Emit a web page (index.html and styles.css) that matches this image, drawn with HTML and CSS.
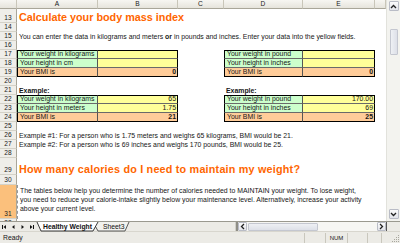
FILE: index.html
```html
<!DOCTYPE html>
<html><head><meta charset="utf-8"><link rel="stylesheet" href="styles.css"></head>
<body>
<div class="app">
 <div class="main">
  <div class="sheet">
   <div class="ch corner"></div><div class="ch">A</div><div class="ch">B</div><div class="ch">C</div><div class="ch">D</div><div class="ch">E</div><div class="ch"></div>

   <div class="rh">13</div><div class="c s6 title"><span>Calculate your body mass index</span></div>
   <div class="rh">14</div><div class="c s6"></div>
   <div class="rh">15</div><div class="c s6"><span>You can enter the data in kilograms and meters <b>or</b> in pounds and inches. Enter your data into the yellow fields.</span></div>
   <div class="rh">16</div><div class="c s6"></div>

   <div class="rh">17</div>
   <div class="c t g tl tt"><span>Your weight in kilograms</span></div>
   <div class="c t y tt tr"></div>
   <div class="c"></div>
   <div class="c t g tl tt"><span>Your weight in pound</span></div>
   <div class="c t y tt tr"></div>
   <div class="c"></div>

   <div class="rh">18</div>
   <div class="c t g tl"><span>Your height in cm</span></div>
   <div class="c t y tr"></div>
   <div class="c"></div>
   <div class="c t g tl"><span>Your height in inches</span></div>
   <div class="c t y tr"></div>
   <div class="c"></div>

   <div class="rh">19</div>
   <div class="c t o tl tb"><span>Your BMI is</span></div>
   <div class="c t o tr tb num bold"><span>0</span></div>
   <div class="c"></div>
   <div class="c t o tl tb"><span>Your BMI is</span></div>
   <div class="c t o tr tb num bold"><span>0</span></div>
   <div class="c"></div>

   <div class="rh">20</div><div class="c s6"></div>

   <div class="rh">21</div>
   <div class="c bold"><span>Example:</span></div>
   <div class="c s2"></div>
   <div class="c bold"><span>Example:</span></div>
   <div class="c s2"></div>

   <div class="rh">22</div>
   <div class="c t g tl tt"><span>Your weight in kilograms</span></div>
   <div class="c t y tt tr num"><span>65</span></div>
   <div class="c"></div>
   <div class="c t g tl tt"><span>Your weight in pound</span></div>
   <div class="c t y tt tr num"><span>170.00</span></div>
   <div class="c"></div>

   <div class="rh">23</div>
   <div class="c t g tl"><span>Your height in meters</span></div>
   <div class="c t y tr num"><span>1.75</span></div>
   <div class="c"></div>
   <div class="c t g tl"><span>Your height in inches</span></div>
   <div class="c t y tr num"><span>69</span></div>
   <div class="c"></div>

   <div class="rh">24</div>
   <div class="c t o tl tb"><span>Your BMI is</span></div>
   <div class="c t o tr tb num bold"><span>21</span></div>
   <div class="c"></div>
   <div class="c t o tl tb"><span>Your BMI is</span></div>
   <div class="c t o tr tb num bold"><span>25</span></div>
   <div class="c"></div>

   <div class="rh">25</div><div class="c s6"></div>
   <div class="rh">26</div><div class="c s6"><span>Example #1: For a person who is 1.75 meters and weighs 65 kilograms, BMI would be 21.</span></div>
   <div class="rh">27</div><div class="c s6"><span>Example #2: For a person who is 69 inches and weighs 170 pounds, BMI would be 25.</span></div>
   <div class="rh">28</div><div class="c s6"></div>
   <div class="rh">29</div><div class="c s6 title wide"><span>How many calories do I need to maintain my weight?</span></div>
   <div class="rh">30</div><div class="c s6"></div>
   <div class="rh sel">31</div><div class="s5 wrap">The tables below help you determine the number of calories needed to MAINTAIN your weight. To lose weight,<br>you need to reduce your calorie-intake slightly below your maintenance level. Alternatively, increase your activity<br>above your current level.</div><div class="c"></div>
   <div class="rh last">32</div><div class="c s6"></div>
  </div>

  <div class="vscroll">
   <div class="sbtn v"><svg width="7" height="5" viewBox="0 0 7 5"><path d="M1 4 L3.5 1.5 L6 4" fill="none" stroke="#222" stroke-width="1.3"/></svg></div>
   <div class="vtrack"><div class="vthumb"></div></div>
   <div class="sbtn v"><svg width="7" height="5" viewBox="0 0 7 5"><path d="M1 1 L3.5 3.5 L6 1" fill="none" stroke="#222" stroke-width="1.3"/></svg></div>
  </div>
 </div>

 <div class="tabbar">
  <div class="nav">
   <svg width="36" height="10" viewBox="0 0 36 10">
    <rect x="2" y="3" width="1" height="4" fill="#111"/><path d="M6 3 L3.5 5 L6 7Z" fill="#111"/>
    <path d="M14.5 3 L12 5 L14.5 7Z" fill="#111"/>
    <path d="M21.5 3 L24 5 L21.5 7Z" fill="#111"/>
    <path d="M30 3 L32.5 5 L30 7Z" fill="#111"/><rect x="33" y="3" width="1" height="4" fill="#111"/>
   </svg>
  </div>
  <div class="tabs">
   <svg class="tabshape" width="96" height="10" viewBox="0 0 96 10">
    <path d="M57 0 L62 9 L89 9 L93 0" fill="#f2f2ee" stroke="#333" stroke-width="0.8"/>
    <path d="M1 0 L5 9 L57 9 L62 0" fill="#fff" stroke="#222" stroke-width="0.9"/>
   </svg>
   <span class="tab act">Healthy Weight</span>
   <span class="tab">Sheet3</span>
  </div>
  <div class="spacer"></div>
  <div class="split"></div>
  <div class="hscroll">
   <div class="sbtn h"><svg width="5" height="7" viewBox="0 0 5 7"><path d="M4 1 L1.5 3.5 L4 6" fill="none" stroke="#222" stroke-width="1.3"/></svg></div>
   <div class="htrack"><div class="hthumb"></div></div>
   <div class="sbtn h"><svg width="5" height="7" viewBox="0 0 5 7"><path d="M1 1 L3.5 3.5 L1 6" fill="none" stroke="#222" stroke-width="1.3"/></svg></div>
  </div>
  <div class="corner2"></div>
 </div>

 <div class="status">
  <span class="ready">Ready</span>
  <div class="panels">
   <div class="panel w1"></div>
   <div class="panel w2">NUM</div>
   <div class="panel w3"></div>
   <div class="panel w4"></div>
   <div class="grip">
    <svg width="10" height="10" viewBox="0 0 10 10"><g fill="#a8a79e"><rect x="8" y="2" width="1" height="1"/><rect x="6" y="4" width="1" height="1"/><rect x="8" y="4" width="1" height="1"/><rect x="4" y="6" width="1" height="1"/><rect x="6" y="6" width="1" height="1"/><rect x="8" y="6" width="1" height="1"/><rect x="2" y="8" width="1" height="1"/><rect x="4" y="8" width="1" height="1"/><rect x="6" y="8" width="1" height="1"/><rect x="8" y="8" width="1" height="1"/></g></svg>
   </div>
  </div>
 </div>
</div>
</body></html>
```

FILE: styles.css
```css
*{box-sizing:border-box;margin:0;padding:0}
html,body{width:400px;height:243px;overflow:hidden;background:#fff}
body{font-family:"Liberation Sans",Arial,sans-serif;font-size:6.9px;color:#161616}
.app{display:flex;flex-direction:column;width:400px;height:243px}
.main{display:flex;height:221px}
.sheet{display:grid;grid-template-columns:17px 81px 80px 46px 79px 72px 11px;grid-template-rows:9px 14px repeat(15,9px) 17px 10px 34px 2px;width:386px;height:221px;overflow:hidden}
.ch{background:linear-gradient(#f7f6f2,#e6e4dc);border-right:1px solid #c9c6b9;border-bottom:1px solid #a9a699;display:flex;align-items:center;justify-content:center;line-height:8px;color:#222;font-size:6.6px}
.rh{background:#efeee9;border-right:1px solid #a9a699;border-bottom:1px solid #d4d2c8;display:flex;align-items:flex-end;justify-content:center;line-height:8px;color:#222;overflow:hidden;font-size:6.6px}
.rh.sel{background:#fbc07c}
.rh.last{align-items:flex-start;border-bottom:0}
.c{display:flex;align-items:flex-end;white-space:nowrap;padding:0 2px;line-height:8px;min-width:0}
.s6{grid-column:span 6}
.s5{grid-column:span 5}
.s2{grid-column:span 2}
.title{color:#ff6600;font-weight:bold;font-size:10.8px;line-height:12px;padding-left:2px}
.title.wide{letter-spacing:0.2px}
.bold{font-weight:bold}
.num{justify-content:flex-end;padding-right:1px}
.t{border-right:1px solid #555;border-bottom:1px solid #6a6a6a}
.tl{border-left:1px solid #000}
.tt{border-top:1px solid #000}
.tr{border-right-color:#000}
.tb{border-bottom-color:#000}
.g{background:#ccffcc}
.y{background:#ffff99}
.o{background:#ffcc99}
.wrap{display:block;white-space:nowrap;padding:1px 0 0 2px;line-height:9px;border-left:1px dashed #999;min-width:0;overflow:hidden}
.vscroll{width:14px;height:221px;background:#f3f3ef;border-left:1px solid #e2e2dc;display:flex;flex-direction:column;align-items:center;padding:1px 0 2px}
.sbtn{background:linear-gradient(#fbfbfb,#e2e4ea);border:1px solid #b9bcc6;border-radius:1px;display:flex;align-items:center;justify-content:center}
.sbtn.v{width:10px;height:10px}
.vtrack{flex:1;width:100%;display:flex;justify-content:center;padding-top:18px}
.vthumb{width:8px;height:26px;background:linear-gradient(90deg,#eef0f4,#dde0e8);border:1px solid #c4c7d0;border-radius:1px}
.tabbar{display:flex;height:10px;background:#ecebe6;border-top:1px solid #9a998f;font-size:6.8px}
.nav{width:36px;display:flex}
.tabs{position:relative;width:96px;height:9px;display:flex;align-items:center}
.tabshape{position:absolute;left:0;top:0}
.tab{position:relative;line-height:8px;color:#111}
.tab.act{font-weight:bold;margin-left:7px;width:60px}
.spacer{flex:1}
.split{width:3px;background:#8f8e86;border-left:1px solid #d0cfc8}
.hscroll{display:flex;width:148px;height:9px;background:#f6f6f3}
.sbtn.h{width:9px;height:9px}
.htrack{flex:1;display:flex;align-items:center;padding:0 1px}
.hthumb{width:70px;height:8px;background:linear-gradient(#eef0f4,#dde0e8);border:1px solid #c4c7d0;border-radius:1px}
.corner2{width:14px;background:#ecebe6;border-left:1px solid #555}
.status{height:12px;background:#ecebe6;border-top:1px solid #d8d6ce;display:flex;align-items:center;justify-content:space-between;padding-left:3px;font-size:6.8px}
.ready{line-height:8px}
.panels{display:flex;height:10px}
.panel{border-left:1px solid #c9c7bd;display:flex;align-items:center;justify-content:center;line-height:8px;font-size:6px}
.w1{width:21px}
.w2{width:22px}
.w3{width:20px}
.w4{width:14px}
.grip{width:19px;border-left:1px solid #c9c7bd;display:flex;justify-content:flex-end;align-items:flex-end}
```
